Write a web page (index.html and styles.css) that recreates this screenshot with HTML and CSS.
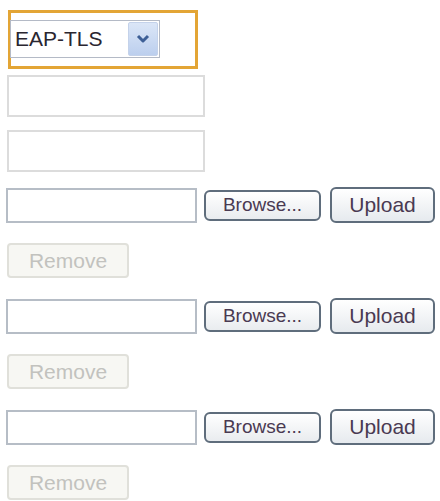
FILE: index.html
```html
<!DOCTYPE html>
<html lang="en">
<head>
  <meta charset="UTF-8">
  <title>Certificate Settings</title>
  <link rel="stylesheet" href="styles.css">
</head>
<body>

  <div class="settings">
    <div class="highlight">
      <div class="select-box">
        <span class="select-value">EAP-TLS</span>
        <span class="select-arrow">
          <svg width="14" height="10" viewBox="0 0 14 10">
            <path d="M2 2 L7 7 L12 2" fill="none" stroke="#3d5f96" stroke-width="3" stroke-linejoin="round"/>
          </svg>
        </span>
      </div>
    </div>

    <input type="text" class="text-field first">
    <input type="text" class="text-field">

    <div class="cert-group">
      <div class="file-row">
        <div class="file-field"></div>
        <button class="browse">Browse...</button>
        <button class="upload">Upload</button>
      </div>
      <button class="remove" disabled>Remove</button>
    </div>

    <div class="cert-group">
      <div class="file-row">
        <div class="file-field"></div>
        <button class="browse">Browse...</button>
        <button class="upload">Upload</button>
      </div>
      <button class="remove" disabled>Remove</button>
    </div>

    <div class="cert-group">
      <div class="file-row">
        <div class="file-field"></div>
        <button class="browse">Browse...</button>
        <button class="upload">Upload</button>
      </div>
      <button class="remove" disabled>Remove</button>
    </div>
  </div>

</body>
</html>
```

FILE: styles.css
```css
/* Page */
body {
  font-family: 'Liberation Sans', Arial, sans-serif;
  background: #ffffff;
  margin: 0;
  padding: 0;
}
.settings {
  display: flex;
  flex-direction: column;
  align-items: flex-start;
  padding: 10px 0 0 6px;
}
/* EAP type selector */
.highlight {
  box-sizing: border-box;
  width: 190px;
  height: 59px;
  margin-left: 2px;
  border: 3px solid #e3a535;
  padding-top: 7px;
}
.select-box {
  box-sizing: border-box;
  width: 150px;
  height: 38px;
  margin-left: -1px;
  border: 1px solid #b4bac6;
  display: flex;
  align-items: center;
  justify-content: space-between;
  padding: 0 1px 0 4px;
  background: #fff;
}
.select-value {
  font-size: 21px;
  color: #2a2630;
}
.select-arrow {
  width: 28px;
  height: 32px;
  display: flex;
  align-items: center;
  justify-content: center;
  background: linear-gradient(to bottom, #dbe6f7, #bccfee);
  border: 1px solid #c4d2ea;
  border-radius: 2px;
}
/* Plain text fields */
.text-field {
  box-sizing: border-box;
  width: 198px;
  height: 42px;
  margin: 6px 0 0 1px;
  border: 2px solid #dcdcdc;
  padding: 0;
}
.text-field.first {
  margin-top: 6px;
}
.text-field + .text-field {
  margin-top: 13px;
}
/* Certificate upload groups */
.cert-group {
  display: flex;
  flex-direction: column;
  align-items: flex-start;
  margin-top: 15px;
}
.cert-group + .cert-group {
  margin-top: 20px;
}
.file-row {
  display: flex;
  align-items: center;
}
.file-field {
  box-sizing: border-box;
  width: 191px;
  height: 35px;
  border: 2px solid #b6bdc6;
  background: #fff;
}
button {
  font-family: 'Liberation Sans', Arial, sans-serif;
  box-sizing: border-box;
  padding: 0;
  color: #4a3a52;
}
.browse {
  width: 117px;
  height: 31px;
  margin-left: 7px;
  font-size: 19px;
  border: 2px solid #5f6d7c;
  border-radius: 6px;
  background: linear-gradient(to bottom, #ffffff, #e9ecef);
}
.upload {
  width: 105px;
  height: 36px;
  margin-left: 9px;
  font-size: 21px;
  border: 2px solid #5f6d7c;
  border-radius: 6px;
  background: linear-gradient(to bottom, #ffffff, #e6eaee);
}
.remove {
  width: 122px;
  height: 35px;
  margin: 20px 0 0 1px;
  font-size: 21px;
  color: #c2c2be;
  border: 2px solid #e0e0da;
  border-radius: 4px;
  background: #f7f7f3;
}
```
